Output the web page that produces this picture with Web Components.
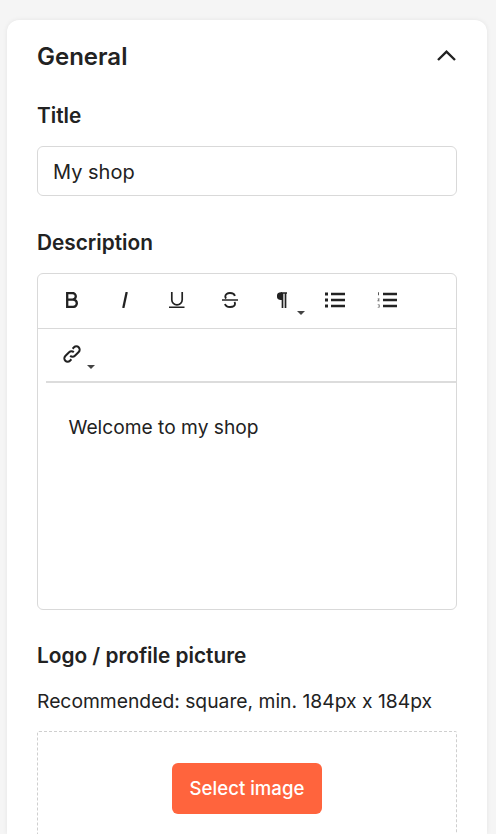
<!DOCTYPE html>
<html>
<head>
<meta charset="utf-8">
<style>
  html, body { margin: 0; height: 834px; overflow: hidden; }
  body { background: #f5f5f5; font-family: Inter, "Liberation Sans", sans-serif; color: #222; }
</style>
</head>
<body>
<settings-card heading="General">
  <form-field label="Title" gap="18">
    <text-box value="My shop"></text-box>
  </form-field>
  <form-field label="Description" gap="18" top="34">
    <rich-editor text="Welcome to my shop"></rich-editor>
  </form-field>
  <form-field label="Logo / profile picture" gap="21" top="33">
    <image-upload hint="Recommended: square, min. 184px x 184px" action="Select image"></image-upload>
  </form-field>
</settings-card>

<script>
class SettingsCard extends HTMLElement {
  constructor() {
    super()
    this.attachShadow({mode: 'open'})
  }
  connectedCallback() {
    this.shadowRoot.innerHTML = `<style>
      :host { display: block; margin: 20px 9px 0 7px; height: 814px; box-sizing: border-box; overflow: hidden;
        background: #fff; border-radius: 12px 12px 0 0; padding: 20px 30px 0;
        box-shadow: 0 0 5px rgba(0, 0, 0, 0.07); }
      header { display: flex; justify-content: space-between; align-items: center; height: 33px; margin-bottom: 30px; }
      h2 { margin: 0; font-size: 24px; line-height: 33px; font-weight: 600; color: #222; }
      svg { display: block; margin: -3px 1px 0 0; }
    </style>
    <header>
      <h2>${this.getAttribute('heading')}</h2>
      <svg width="19" height="12" viewBox="0 0 19 12"><path d="M1 11 9.500 2.600 18 11" fill="none" stroke="#222" stroke-width="2.400"/></svg>
    </header>
    <slot></slot>`
  }
}

class FormField extends HTMLElement {
  constructor() {
    super()
    this.attachShadow({mode: 'open'})
  }
  connectedCallback() {
    const gap = this.getAttribute('gap') || 16
    const top = this.getAttribute('top') || 0
    this.shadowRoot.innerHTML = `<style>
      :host { display: block; margin-top: ${top}px; }
      label { display: block; padding-top: 1px; font-size: 20.800px; line-height: 24px; font-weight: 600; color: #222; margin-bottom: ${gap}px; }
    </style>
    <label>${this.getAttribute('label')}</label>
    <slot></slot>`
  }
}

class TextBox extends HTMLElement {
  constructor() {
    super()
    this.attachShadow({mode: 'open'})
  }
  connectedCallback() {
    this.shadowRoot.innerHTML = `<style>
      :host { display: block; height: 50px; box-sizing: border-box; border: 1px solid #d9d9d9; border-radius: 6px;
        padding: 0 15px; font-size: 20px; line-height: 50px; color: #222; }
    </style>${this.getAttribute('value')}`
  }
}

class ToolButton extends HTMLElement {
  constructor() {
    super()
    this.attachShadow({mode: 'open'})
  }
  connectedCallback() {
    const caret = this.getAttribute('caret')
    this.shadowRoot.innerHTML = `<style>
      :host { position: relative; width: 52.5px; height: 100%; display: flex; align-items: center; justify-content: center; }
      ::slotted(svg) { display: block; }
      i { position: absolute; right: 4px; bottom: ${caret}px; border: 4px solid transparent; border-top: 4px solid #444; border-bottom: 0; }
    </style><slot></slot>${caret ? '<i></i>' : ''}`
  }
}

class RichEditor extends HTMLElement {
  constructor() {
    super()
    this.attachShadow({mode: 'open'})
  }
  connectedCallback() {
    this.shadowRoot.innerHTML = `<style>
      :host { display: block; height: 337px; box-sizing: border-box; border: 1px solid #d9d9d9; border-radius: 6px; overflow: hidden; }
      .row { display: flex; padding: 0 0 2px 8px; height: 52px; border-bottom: 1px solid #d9d9d9; }
      .row.second { height: 50px; border-bottom: 0; }
      .rule { height: 2px; margin-left: 8px; background: #dcdcdc; }
      .content { padding: 32px 30.500px; font-size: 19.200px; line-height: 24px; color: #222; }
    </style>
    <div class="row">
      <tool-button><svg width="12" height="16" viewBox="0 0 12 16"><path d="M1.200 1h5.300a3.300 3.300 0 0 1 0 6.600H1.200zM1.200 7.600h6a3.650 3.650 0 0 1 0 7.300h-6z" fill="none" stroke="#222" stroke-width="2.300"/></svg></tool-button>
      <tool-button><svg width="6" height="16" viewBox="0 0 6 16"><path d="M4.700 0 1.300 16" fill="none" stroke="#222" stroke-width="2.300"/></svg></tool-button>
      <tool-button><svg width="16" height="16" viewBox="0 0 16 16"><path d="M2.800 0v7.700a5.200 5.200 0 0 0 10.400 0V0" fill="none" stroke="#222" stroke-width="1.700"/><path d="M0 15.200h15.500" stroke="#222" stroke-width="1.600"/></svg></tool-button>
      <tool-button><svg width="16" height="16" viewBox="0 0 16 16"><path d="M12.800 4C12.400 2 10.600 1 8 1 5.200 1 3.300 2.300 3.300 4.500c0 .9.300 1.600.9 2.100M12.400 10c.4.500.6 1 .6 1.800 0 2-2 3.200-4.900 3.200-2.700 0-4.600-1.100-5.100-3" fill="none" stroke="#222" stroke-width="1.900"/><path d="M0 8h16" stroke="#222" stroke-width="1.400"/></svg></tool-button>
      <tool-button caret="11"><svg width="10" height="16" viewBox="0 0 10 16"><path d="M4 1h6M5.500 1V16M8.500 1V16" fill="none" stroke="#222" stroke-width="1.700"/><path d="M5 .2H3.800a3.900 3.900 0 0 0 0 7.800H5z" fill="#222"/></svg></tool-button>
      <tool-button><svg width="20" height="16" viewBox="0 0 20 16"><path d="M0 .5h3v3H0zM0 6.500h3v3H0zM0 12.500h3v3H0z" fill="#222"/><path d="M6 2h14M6 8h14M6 14h14" stroke="#222" stroke-width="2.300"/></svg></tool-button>
      <tool-button><svg width="20" height="16" viewBox="0 0 20 16"><path d="M1 .3h1v3H1zM.7 6.500h1.800v.8L1.300 8.600h1.300v.7H.5v-.8l1.200-1.300h-1zM.7 12.500h1.900v3H.7v-.6h1.200v-.6H1v-.6h.9v-.6H.7z" fill="#555"/><path d="M6 2h14M6 8h14M6 14h14" stroke="#222" stroke-width="2.300"/></svg></tool-button>
    </div>
    <div class="row second">
      <tool-button caret="10"><svg width="20" height="20" viewBox="0 0 20 20"><g fill="none" stroke="#222" stroke-width="2"><path d="M8.200 11.800a3.300 3.300 0 0 0 4.700 0l3.800-3.800a3.300 3.300 0 0 0-4.700-4.700l-1.400 1.400"/><path d="M11.800 8.200a3.300 3.300 0 0 0-4.700 0l-3.800 3.800a3.300 3.300 0 0 0 4.700 4.700l1.400-1.400"/></g></svg></tool-button>
    </div>
    <div class="rule"></div>
    <div class="content">${this.getAttribute('text')}</div>`
  }
}

class ImageUpload extends HTMLElement {
  constructor() {
    super()
    this.attachShadow({mode: 'open'})
  }
  connectedCallback() {
    this.shadowRoot.innerHTML = `<style>
      :host { display: block; }
      p { margin: 0 0 18px; font-size: 19.300px; line-height: 24px; color: #222; }
      .drop { border: 1px dashed #cfcfcf; border-radius: 2px; height: 200px; padding-top: 31px; box-sizing: border-box; display: flex; justify-content: center; align-items: flex-start; }
      button { all: unset; width: 150px; height: 51px; box-sizing: border-box; background: #ff643d; color: #fff; border-radius: 6px;
        font-family: Inter, "Liberation Sans", sans-serif; font-size: 18.600px; font-weight: 500; text-align: center; line-height: 51px; }
    </style>
    <p>${this.getAttribute('hint')}</p>
    <div class="drop"><button>${this.getAttribute('action')}</button></div>`
  }
}

customElements.define('settings-card', SettingsCard)
customElements.define('form-field', FormField)
customElements.define('text-box', TextBox)
customElements.define('tool-button', ToolButton)
customElements.define('rich-editor', RichEditor)
customElements.define('image-upload', ImageUpload)
</script>
</body>
</html>
